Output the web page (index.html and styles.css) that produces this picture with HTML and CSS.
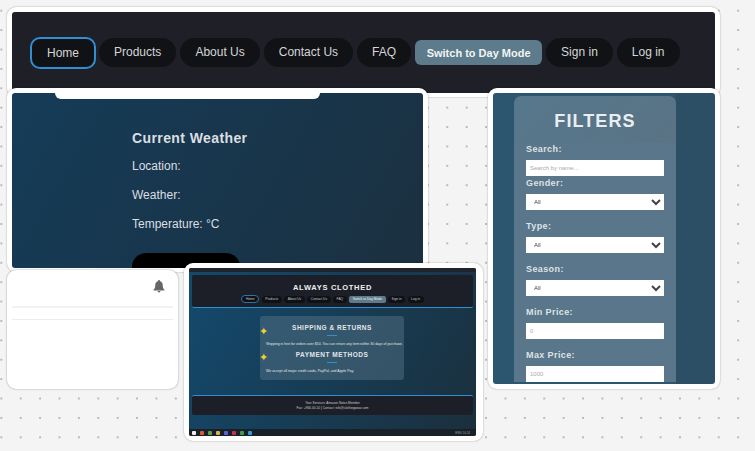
FILE: index.html
```html
<!DOCTYPE HTML>
<html lang="en-US">
<head>
	<meta charset="UTF-8" />
	<title>Always Clothed board</title>
	<link rel="stylesheet" href="styles.css">
</head>
<body>

	<section class="shot shot-nav">
		<nav class="nav">
			<a class="pill pill-active">Home</a>
			<a class="pill">Products</a>
			<a class="pill">About Us</a>
			<a class="pill">Contact Us</a>
			<a class="pill">FAQ</a>
			<button class="mode">Switch to Day Mode</button>
			<a class="pill">Sign in</a>
			<a class="pill">Log in</a>
		</nav>
	</section>

	<section class="shot shot-weather">
		<div class="weather">
			<h2>Current Weather</h2>
			<p>Location:</p>
			<p>Weather:</p>
			<p>Temperature: °C</p>
			<div class="weather-btn"></div>
		</div>
	</section>
	<div class="notch"></div>

	<section class="shot shot-filters">
		<form class="filters">
			<h2>FILTERS</h2>
			<label>Search:</label>
			<input class="field field-first" type="text" placeholder="Search by name...">
			<label class="label-tight">Gender:</label>
			<select class="field"><option>All</option></select>
			<label>Type:</label>
			<select class="field"><option>All</option></select>
			<label>Season:</label>
			<select class="field"><option>All</option></select>
			<label>Min Price:</label>
			<input class="field" type="text" placeholder="0">
			<label>Max Price:</label>
			<input class="field" type="text" placeholder="1000">
		</form>
	</section>

	<section class="notes">
		<div class="notes-head">
			<svg class="bell" viewBox="0 0 24 24" width="14" height="14"><path fill="#666" d="M12 1.5a1.8 1.8 0 0 0-1.8 1.8v.6C7 4.800 5.600 7.500 5.600 10.500c0 4-1 5.800-3 7.800v1.200h18.800v-1.200c-2-2-3-3.800-3-7.800 0-3-1.400-5.700-4.600-6.600v-.6A1.800 1.800 0 0 0 12 1.500zM9.500 20.500a2.500 2.500 0 0 0 5 0z"/></svg>
		</div>
		<div class="notes-rule notes-rule-thick"></div>
		<div class="notes-rule"></div>
	</section>

	<section class="shot shot-page">
		<div class="page">
			<div class="page-top"></div>
			<header class="page-head">
				<h3>ALWAYS CLOTHED</h3>
				<div class="mini-nav">
					<span class="mini mini-active">Home</span>
					<span class="mini">Products</span>
					<span class="mini">About Us</span>
					<span class="mini">Contact Us</span>
					<span class="mini">FAQ</span>
					<span class="mini mini-mode">Switch to Day Mode</span>
					<span class="mini">Sign in</span>
					<span class="mini">Log in</span>
				</div>
			</header>
			<div class="faq">
				<span class="star star-one">✦</span>
				<span class="star star-two">✦</span>
				<h4>SHIPPING &amp; RETURNS</h4>
				<div class="faq-rule"></div>
				<p>Shipping is free for orders over $50. You can return any item within 30 days of purchase.</p>
				<h4>PAYMENT METHODS</h4>
				<div class="faq-rule"></div>
				<p>We accept all major credit cards, PayPal, and Apple Pay.</p>
			</div>
			<footer class="page-foot">
				<div>Your Services: Amazon Notes Member</div>
				<div>Fax: +966-00-10 | Contact: info@clothingwear.com</div>
			</footer>
			<div class="taskbar">
				<i class="task task-white"></i>
				<i class="task task-orange"></i>
				<i class="task task-chrome"></i>
				<i class="task task-yellow"></i>
				<i class="task task-blue"></i>
				<i class="task task-red"></i>
				<i class="task task-green"></i>
				<i class="task task-code"></i>
				<span class="tray">ENG 10:24</span>
			</div>
		</div>
	</section>

</body>
</html>
```

FILE: styles.css
```css
* {
	margin: 0;
	padding: 0;
	box-sizing: border-box;
}
body {
	background-color: #f4f4f4;
	background-image: radial-gradient(#b9b9b9 0.7px, transparent 0.9px);
	background-position: 11px 1px;
	background-size: 19.4px 19.4px;
	font-family: "Liberation Sans", Arial, sans-serif;
	height: 451px;
	overflow: hidden;
	position: relative;
	width: 755px;
}

/* the cards sit on a free board, so they keep their own coordinates */
.shot {
	background-color: #fff;
	border-radius: 9px;
	box-shadow: 0 0 2px rgba(0, 0, 0, .35);
	padding: 5px;
	position: absolute;
}
.shot-nav {
	height: 90px;
	left: 7px;
	top: 7px;
	width: 713px;
}
.shot-weather {
	height: 184px;
	left: 7px;
	top: 88px;
	width: 421px;
}
.shot-filters {
	height: 301px;
	left: 488px;
	top: 88px;
	width: 232px;
}
.shot-page {
	height: 178px;
	left: 184px;
	top: 263px;
	width: 299px;
}

.nav {
	align-items: center;
	background-color: #1e1f27;
	border-radius: 3px;
	display: flex;
	gap: 4px;
	height: 81px;
	padding: 0 18px;
}
.pill {
	background-color: #111216;
	border-radius: 15px;
	color: #d4d6d8;
	font-size: 12px;
	line-height: 29px;
	padding: 0 15px;
}
.pill-active {
	border: 2px solid #2f8fd0;
	border-radius: 10px;
	line-height: 28px;
	margin-right: -1px;
}
.mode {
	background-color: #5d7b8b;
	border: 0;
	border-radius: 6px;
	color: #f2f4f5;
	font-family: inherit;
	font-size: 11px;
	font-weight: bold;
	height: 25px;
	width: 127px;
}

.weather {
	background: linear-gradient(120deg, #153c58, #1b3040);
	border-radius: 3px;
	color: #dcdfe1;
	font-size: 12px;
	height: 175px;
	overflow: hidden;
	padding: 37px 0 0 120px;
}
.weather h2 {
	font-size: 14px;
	letter-spacing: .4px;
	margin-bottom: 13px;
}
.weather p {
	line-height: 14px;
	margin-bottom: 15px;
}
.weather-btn {
	background-color: #000;
	border-radius: 14px 14px 0 0;
	height: 20px;
	margin-top: 22px;
	width: 108px;
}
.notch {
	background-color: #fff;
	border-radius: 0 0 6px 6px;
	height: 11px;
	left: 55px;
	position: absolute;
	top: 88px;
	width: 265px;
}

.filters {
	background:
		linear-gradient(90deg, #2c5570 0, #2c5570 21px, transparent 21px, transparent 183px, #2d4f66 183px),
		#2c5570;
	border-radius: 3px;
	height: 291px;
	overflow: hidden;
	padding: 3px 0 0 21px;
}
.filters h2 {
	background: linear-gradient(135deg, #56778c, #5a7385);
	border-radius: 7px 7px 0 0;
	color: #e9eef1;
	font-size: 18px;
	letter-spacing: 1.100px;
	line-height: 20px;
	margin: 0 0 0 0;
	padding-top: 15px;
	padding-bottom: 12px;
	text-align: center;
	width: 162px;
}
.filters label {
	background-color: #59768a;
	color: #dde2e5;
	display: block;
	font-size: 9px;
	font-weight: bold;
	letter-spacing: .4px;
	line-height: 12px;
	padding: 10px 0 5px 12px;
	width: 162px;
}
.filters h2 + label {
	padding-top: 0;
}
.filters .label-tight {
	padding-top: 1px;
}
.field {
	background-color: #fff;
	border: 0;
	border-left: 12px solid #59768a;
	border-right: 12px solid #59768a;
	border-radius: 0;
	color: #444;
	display: block;
	font-family: inherit;
	font-size: 6px;
	height: 16px;
	outline: 0;
	padding-left: 4px;
	width: 162px;
}
.field::placeholder {
	color: #aaa;
}

.notes {
	background-color: #fff;
	border-radius: 9px;
	box-shadow: 0 0 2px rgba(0, 0, 0, .4);
	height: 119px;
	left: 7px;
	padding: 0 5px;
	position: absolute;
	top: 270px;
	width: 171px;
}
.notes-head {
	display: flex;
	height: 36px;
	justify-content: flex-end;
	padding: 9px 7px 0 0;
}
.notes-rule {
	background-color: #ececec;
	height: 1px;
	margin-bottom: 11px;
}
.notes-rule-thick {
	background-color: #f2f2f2;
	height: 2px;
}

.page {
	background: linear-gradient(120deg, #134a6e, #1b2f3c);
	border-radius: 2px;
	display: flex;
	flex-direction: column;
	height: 168px;
	overflow: hidden;
	position: relative;
	width: 287px;
}
.page-top {
	background-color: #20242c;
	flex: none;
	height: 4px;
}
.page-head {
	background-color: #1d1f28;
	border-bottom: 1px solid #2f8fd0;
	border-radius: 2px;
	color: #eef0f1;
	flex: none;
	height: 33px;
	margin: 3px 3px 0;
	padding-top: 8px;
	text-align: center;
}
.page-head h3 {
	font-size: 7.5px;
	letter-spacing: .7px;
	line-height: 9px;
}
.mini-nav {
	align-items: center;
	display: flex;
	gap: 2.500px;
	justify-content: center;
	margin-top: 3px;
}
.mini {
	background-color: #101116;
	border-radius: 4px;
	color: #c4c6c8;
	font-size: 3.300px;
	line-height: 7px;
	padding: 0 3.500px;
}
.mini-active {
	border: 1px solid #2b76a8;
	line-height: 6px;
}
.mini-mode {
	background-color: #5d7b8b;
	border-radius: 2px;
	color: #f2f4f5;
}
.faq {
	background-color: rgba(92, 120, 138, .45);
	border-radius: 3px;
	color: #e2e6e8;
	flex: none;
	height: 64px;
	margin: 8px 0 0 71px;
	padding-top: 8px;
	position: relative;
	text-align: center;
	width: 144px;
}
.faq h4 {
	font-size: 6.500px;
	font-weight: bold;
	letter-spacing: .5px;
	line-height: 8px;
}
.faq-rule {
	background-color: #2f8fd0;
	height: 1px;
	margin: 3px auto 6px;
	width: 10px;
}
.faq p {
	font-size: 3.500px;
	line-height: 5px;
	margin-bottom: 0;
	padding-left: 6px;
	text-align: left;
	white-space: nowrap;
}
.faq p + h4 {
	margin-top: 4px;
}
.star {
	color: #f2d02e;
	font-size: 11px;
	left: -1px;
	line-height: 11px;
	position: absolute;
}
.star-one {
	top: 10px;
}
.star-two {
	top: 36px;
}
.page-foot {
	background-color: #1d1f28;
	border-radius: 2px;
	border-top: 1px solid #2f8fd0;
	color: #c9cbce;
	flex: none;
	font-size: 3.200px;
	height: 20px;
	line-height: 5px;
	margin: 15px 3px 0;
	padding-top: 5px;
	text-align: center;
}
.taskbar {
	align-items: center;
	background-color: #1a2028;
	bottom: 0;
	display: flex;
	gap: 4px;
	height: 7px;
	left: 0;
	padding-left: 3px;
	position: absolute;
	right: 0;
}
.task {
	border-radius: 1px;
	display: block;
	height: 4px;
	width: 4px;
}
.task-white { background-color: #eee; }
.task-orange { background-color: #e0572a; }
.task-chrome { background-color: #5ea04a; }
.task-yellow { background-color: #d6b24a; }
.task-blue { background-color: #5a62e0; }
.task-red { background-color: #c8314a; }
.task-green { background-color: #3f9a4a; }
.task-code { background-color: #2f9ae0; }
.tray {
	color: #9aa0a6;
	font-size: 3px;
	margin-left: auto;
	padding-right: 6px;
}
```
